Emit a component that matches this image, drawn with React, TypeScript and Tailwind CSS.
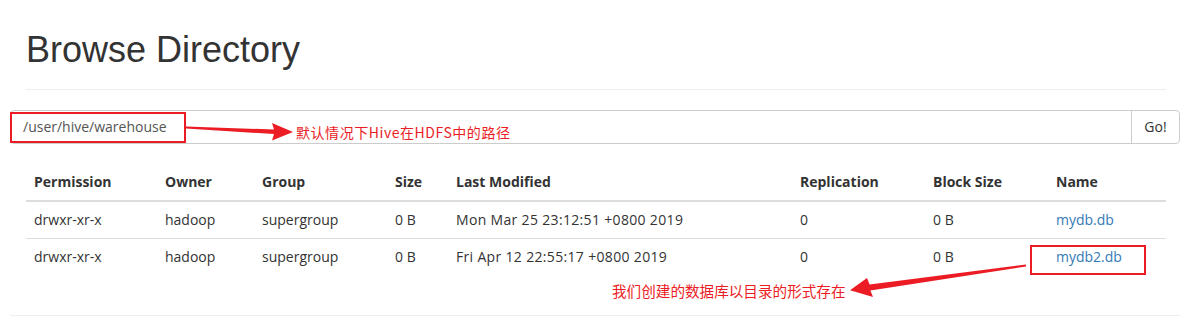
import React from "react";

const cols = [131, 97, 133, 61, 344, 133, 123, 118];
const headers = ["Permission", "Owner", "Group", "Size", "Last Modified", "Replication", "Block Size", "Name"];
const rows = [
  ["drwxr-xr-x", "hadoop", "supergroup", "0 B", "Mon Mar 25 23:12:51 +0800 2019", "0", "0 B", "mydb.db"],
  ["drwxr-xr-x", "hadoop", "supergroup", "0 B", "Fri Apr 12 22:55:17 +0800 2019", "0", "0 B", "mydb2.db"],
];

export default function App() {
  return (
    <div className="relative w-[1203px] h-[336px] bg-white overflow-hidden text-[#333]" style={{ fontFamily: '"Open Sans", "Noto Sans CJK SC", sans-serif' }}>
      <div className="w-[1170px] ml-[10px]">
        <div className="ml-[16px] mr-[14px] pt-[30px] pb-[9px] border-b border-[#eee]">
          <h1 className="text-[36px] leading-[39.6px] mb-[10px] text-[#333]" style={{ fontFamily: '"Liberation Sans", Arial, sans-serif' }}>
            Browse Directory
          </h1>
        </div>
        <div className="mt-[20px] flex h-[34px] border border-[#ccc] rounded-[4px] text-[14px]">
          <div className="flex-1 flex items-center px-[12px] text-[#555]">/user/hive/warehouse</div>
          <div className="w-[48px] border-l border-[#ccc] flex items-center justify-center text-[#333]">Go!</div>
        </div>
        <div className="ml-[16px] mr-[14px] mt-[20px] mb-[40px]">
          <table className="w-full table-fixed border-collapse text-[14px] leading-[20px]">
            <colgroup>
              {cols.map((w, i) => (
                <col key={i} style={{ width: w }} />
              ))}
            </colgroup>
            <thead>
              <tr className="border-b-2 border-[#ddd]">
                {headers.map((h) => (
                  <th key={h} className="p-[8px] text-left font-bold">{h}</th>
                ))}
              </tr>
            </thead>
            <tbody>
              {rows.map((r, ri) => (
                <tr key={ri} className={ri > 0 ? "border-t border-[#ddd]" : ""}>
                  {r.map((c, ci) => (
                    <td
                      key={ci}
                      className={
                        ci === 7
                          ? "p-[8px] text-[#337ab7]"
                          : ci === 4
                          ? "p-[8px] tracking-[0.33px]"
                          : "p-[8px]"
                      }
                    >
                      {c}
                    </td>
                  ))}
                </tr>
              ))}
            </tbody>
          </table>
        </div>
        <div className="border-t border-[#eee]" />
      </div>

      {/* annotations */}
      <div className="absolute left-[10px] top-[112px] w-[176px] h-[31px] border-2 border-[#ec1c24]" />
      <div className="absolute left-[1030px] top-[245px] w-[116px] h-[30px] border-2 border-[#ec1c24]" />
      <div className="absolute left-[296px] top-[122px] text-[14px] tracking-[0.55px] leading-[20px] text-[#ec1c24]" style={{ fontFamily: '"Noto Sans CJK SC", sans-serif' }}>
        默认情况下Hive在HDFS中的路径
      </div>
      <div className="absolute left-[612px] top-[281px] text-[14.6px] leading-[20px] text-[#ec1c24]" style={{ fontFamily: '"Noto Sans CJK SC", sans-serif' }}>
        我们创建的数据库以目录的形式存在
      </div>
      <svg className="absolute left-0 top-0" width="1203" height="336" viewBox="0 0 1203 336">
        <polygon points="186,126.5 274,129.5 272,123 293,132 272,140.5 274,134 186,128.5" fill="#ec1c24" />
        <polygon points="1026,264.5 869.6,284.5 867,278 850,290.3 873,297 870.4,290.5 1026,266.5" fill="#ec1c24" />
      </svg>
    </div>
  );
}
